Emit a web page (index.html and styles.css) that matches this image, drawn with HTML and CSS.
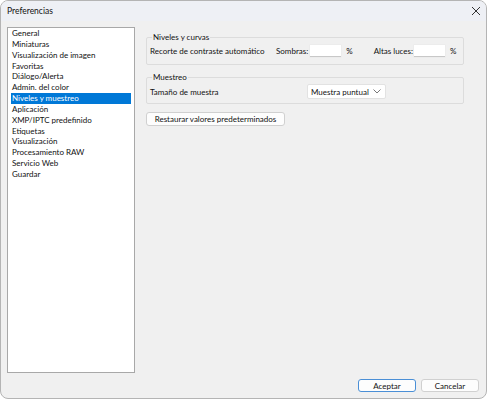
FILE: index.html
```html
<!DOCTYPE html>
<html lang="es">
<head>
    <meta charset="UTF-8">
    <title>Preferencias</title>
    <link rel="stylesheet" href="styles.css">
</head>
<body>
    <div class="window">
        <div class="titlebar">
            <span class="title">Preferencias</span>
            <svg class="close" width="10" height="10" viewBox="0 0 10 10">
                <path d="M1 1 L9 9 M9 1 L1 9" stroke="#333" stroke-width="1" fill="none"/>
            </svg>
        </div>
        <div class="content">
            <ul class="category-list">
                <li>General</li>
                <li>Miniaturas</li>
                <li>Visualización de imagen</li>
                <li>Favoritas</li>
                <li>Diálogo/Alerta</li>
                <li>Admin. del color</li>
                <li class="selected">Niveles y muestreo</li>
                <li>Aplicación</li>
                <li>XMP/IPTC predefinido</li>
                <li>Etiquetas</li>
                <li>Visualización</li>
                <li>Procesamiento RAW</li>
                <li>Servicio Web</li>
                <li>Guardar</li>
            </ul>
            <div class="panel">
                <fieldset class="group">
                    <legend>Niveles y curvas</legend>
                    <div class="row">
                        <span class="row-label">Recorte de contraste automático</span>
                        <span class="field-label">Sombras:</span>
                        <span class="textbox"></span>
                        <span class="unit">%</span>
                        <span class="field-label highlights">Altas luces:</span>
                        <span class="textbox"></span>
                        <span class="unit">%</span>
                    </div>
                </fieldset>
                <fieldset class="group">
                    <legend>Muestreo</legend>
                    <div class="row">
                        <span class="row-label sample">Tamaño de muestra</span>
                        <span class="select">
                            Muestra puntual
                            <svg class="chevron" width="8" height="5" viewBox="0 0 8 5">
                                <path d="M0.5 0.5 L4 4 L7.5 0.5" stroke="#555" stroke-width="0.8" fill="none"/>
                            </svg>
                        </span>
                    </div>
                </fieldset>
                <button class="btn reset">Restaurar valores predeterminados</button>
            </div>
        </div>
        <div class="footer">
            <button class="btn default">Aceptar</button>
            <button class="btn">Cancelar</button>
        </div>
    </div>
</body>
</html>
```

FILE: styles.css
```css
body {
    margin: 0;
    background-color: #fff;
    font-family: Lato, "Noto Sans", sans-serif;
    font-size: 8px;
    color: #111;
}
.window {
    width: 485px;
    height: 397px;
    border: 1px solid #b4b4b4;
    border-radius: 8px;
    background-color: #f0f0f0;
    overflow: hidden;
    display: flex;
    flex-direction: column;
}
.titlebar {
    height: 20px;
    background-color: #eef0f5;
    display: flex;
    align-items: center;
    justify-content: space-between;
    padding: 0 5px 0 6px;
}
.title {
    font-size: 8.5px;
}
.content {
    display: flex;
    padding: 6px 0 0 6px;
    height: 346px;
}
.category-list {
    list-style: none;
    margin: 0;
    padding: 0 3px;
    width: 120px;
    height: 344px;
    background-color: #fff;
    border: 1px solid #a8a8a8;
}
.category-list li {
    height: 10.85px;
    line-height: 10.85px;
    padding-left: 1px;
    white-space: nowrap;
}
.category-list li.selected {
    background-color: #0078d7;
    color: #fff;
}
.panel {
    margin-left: 11px;
    width: 318px;
    white-space: nowrap;
}
.group {
    margin: 5px 0 0 0;
    padding: 2px 3px 7px 3px;
    border: 1px solid #dcdcdc;
    border-radius: 2px;
}
.group + .group {
    margin-top: 7px;
    padding-top: 3px;
    padding-bottom: 5px;
}
.group legend {
    padding: 0 1px;
    margin-left: 2px;
    line-height: 10px;
}
.row {
    display: flex;
    align-items: center;
    height: 13px;
}
.row-label {
    width: 126px;
}
.row-label.sample {
    width: 157px;
}
.textbox {
    width: 31px;
    height: 11px;
    margin-left: 2px;
    background-color: #fff;
    border-bottom: 1px solid #c8c8c8;
    box-shadow: 0 0 0 0.5px #e8e8e8;
}
.field-label.highlights {
    margin-left: 21px;
}
.highlights + .textbox {
    margin-left: 1px;
}
.unit {
    margin-left: 5px;
}
.select {
    display: flex;
    align-items: center;
    justify-content: space-between;
    width: 70px;
    height: 13px;
    padding: 0 4px 0 3px;
    background-color: #fff;
    border: 1px solid #e2e2e2;
    border-radius: 2px;
}
.btn {
    font-family: inherit;
    font-size: 8px;
    color: #111;
    height: 13px;
    padding: 0;
    background-color: #fdfdfd;
    border: 1px solid #d0d0d0;
    border-radius: 3px;
}
.reset {
    margin-top: 8px;
    width: 139px;
    height: 14px;
}
.footer {
    display: flex;
    justify-content: flex-end;
    gap: 5px;
    padding: 6px 7px 0 0;
}
.footer .btn {
    width: 58px;
}
.btn.default {
    border-color: #4a8fd6;
}
```
